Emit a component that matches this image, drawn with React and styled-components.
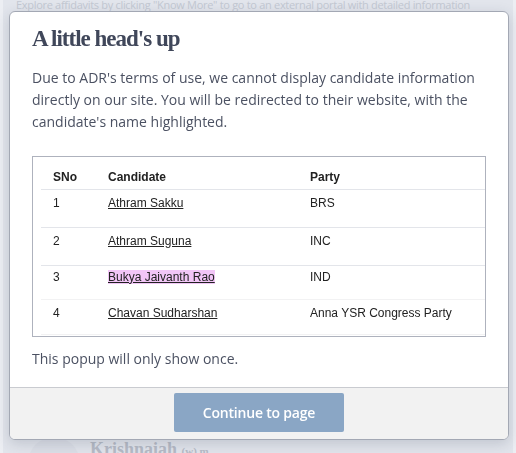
import React from 'react';
import styled, { createGlobalStyle } from 'styled-components';

const GlobalStyle = createGlobalStyle`
  html, body {
    margin: 0;
    padding: 0;
    background: #eceef3;
    overflow: hidden;
  }
`;

const Page = styled.div`
  height: 453px;
  margin: 0 3px;
  background: #e2e5ec;
  overflow: hidden;
`;

const Hint = styled.p`
  margin: -2px 0 0;
  padding-left: 13px;
  font-family: 'Open Sans', 'Noto Sans', sans-serif;
  font-size: 11px;
  line-height: 14px;
  letter-spacing: -0.3px;
  color: #c3c8d2;
  white-space: nowrap;
`;

const CandidateCard = styled.div`
  display: flex;
  align-items: flex-start;
  gap: 10px;
  margin-top: 425px;
  padding-left: 25px;
`;

const Avatar = styled.div`
  width: 52px;
  height: 52px;
  border-radius: 50%;
  background: #dcdfe7;
`;

const CandidateName = styled.div`
  margin-top: 2px;
  font-family: 'Liberation Serif', serif;
  font-size: 18px;
  font-weight: bold;
  color: #b6bbc6;

  small {
    font-size: 11px;
  }
`;

const Overlay = styled.div`
  position: fixed;
  inset: 0;
  padding: 11px 7px 0 9px;
`;

const Modal = styled.div`
  background: #fff;
  border: 1px solid #a3a8b4;
  border-radius: 6px;
  box-shadow: 0 4px 14px rgba(40, 50, 70, 0.18);
  overflow: hidden;
`;

const Body = styled.div`
  padding: 11px 22px 17px;
  font-family: 'Open Sans', 'Noto Sans', sans-serif;
  color: #4b5162;
`;

const Title = styled.h2`
  margin: 0 0 12px;
  font-family: 'Liberation Serif', serif;
  font-size: 23px;
  line-height: 32px;
  font-weight: bold;
  letter-spacing: -1px;
  color: #40475a;
`;

const Text = styled.p`
  margin: 0;
  font-size: 14px;
  line-height: 22px;
`;

const TableBox = styled.div`
  margin: 23px 0 11px;
  border: 1px solid #aeb2bd;
  padding: 7px 0 1px 8px;
`;

const Table = styled.table`
  width: 100%;
  border-collapse: collapse;
  font-family: 'Liberation Sans', Arial, sans-serif;
  font-size: 12px;
  line-height: 16px;
  color: #222;
`;

const Row = styled.tr`
  height: ${p => p.$height}px;
  border-bottom: 1px solid ${p => p.$soft ? '#f2f2f3' : '#e3e5ea'};
`;

const Head = styled.th`
  text-align: left;
  font-weight: bold;
  padding: 5px 12px 3px;
  width: ${p => p.$width || 'auto'};
`;

const Cell = styled.td`
  vertical-align: top;
  padding: ${p => p.$top}px 12px 0;
`;

const NameLink = styled.a`
  color: #222;
  text-decoration: underline;
  background: ${p => p.$highlight ? '#f2c6f7' : 'transparent'};
`;

const Footer = styled.div`
  display: flex;
  justify-content: center;
  padding: 5px 0 7px;
  background: #f2f2f2;
  border-top: 1px solid #c9cbd0;
`;

const ContinueButton = styled.button`
  width: 170px;
  height: 39px;
  border: none;
  border-radius: 2px;
  background: #8aa6c5;
  color: #fff;
  font-family: 'Open Sans', 'Noto Sans', sans-serif;
  font-size: 14px;
  font-weight: 600;
  letter-spacing: -0.2px;
  cursor: pointer;
`;

const candidates = [
  { sno: 1, name: 'Athram Sakku', party: 'BRS', height: 38, top: 5 },
  { sno: 2, name: 'Athram Suguna', party: 'INC', height: 38, top: 5 },
  { sno: 3, name: 'Bukya Jaivanth Rao', party: 'IND', height: 34, top: 3, highlight: true, soft: true },
  { sno: 4, name: 'Chavan Sudharshan', party: 'Anna YSR Congress Party', height: 35, top: 5, soft: true },
];

const App = () => {
  return (
    <>
      <GlobalStyle />
      <Page>
        <Hint>Explore affidavits by clicking "Know More" to go to an external portal with detailed information</Hint>
        <CandidateCard>
          <Avatar />
          <CandidateName>Krishnaiah <small>(w) m</small></CandidateName>
        </CandidateCard>
      </Page>

      <Overlay>
        <Modal>
          <Body>
            <Title>A little head's up</Title>
            <Text>
              Due to ADR's terms of use, we cannot display candidate information
              directly on our site. You will be redirected to their website, with the
              candidate's name highlighted.
            </Text>

            <TableBox>
              <Table>
                <thead>
                  <Row $height={25}>
                    <Head $width="31px">SNo</Head>
                    <Head $width="178px">Candidate</Head>
                    <Head>Party</Head>
                  </Row>
                </thead>
                <tbody>
                  {candidates.map(c => (
                    <Row key={c.sno} $height={c.height} $soft={c.soft}>
                      <Cell $top={c.top}>{c.sno}</Cell>
                      <Cell $top={c.top}>
                        <NameLink href="#" $highlight={c.highlight}>{c.name}</NameLink>
                      </Cell>
                      <Cell $top={c.top}>{c.party}</Cell>
                    </Row>
                  ))}
                </tbody>
              </Table>
            </TableBox>

            <Text>This popup will only show once.</Text>
          </Body>
          <Footer>
            <ContinueButton>Continue to page</ContinueButton>
          </Footer>
        </Modal>
      </Overlay>
    </>
  );
};

export default App;
